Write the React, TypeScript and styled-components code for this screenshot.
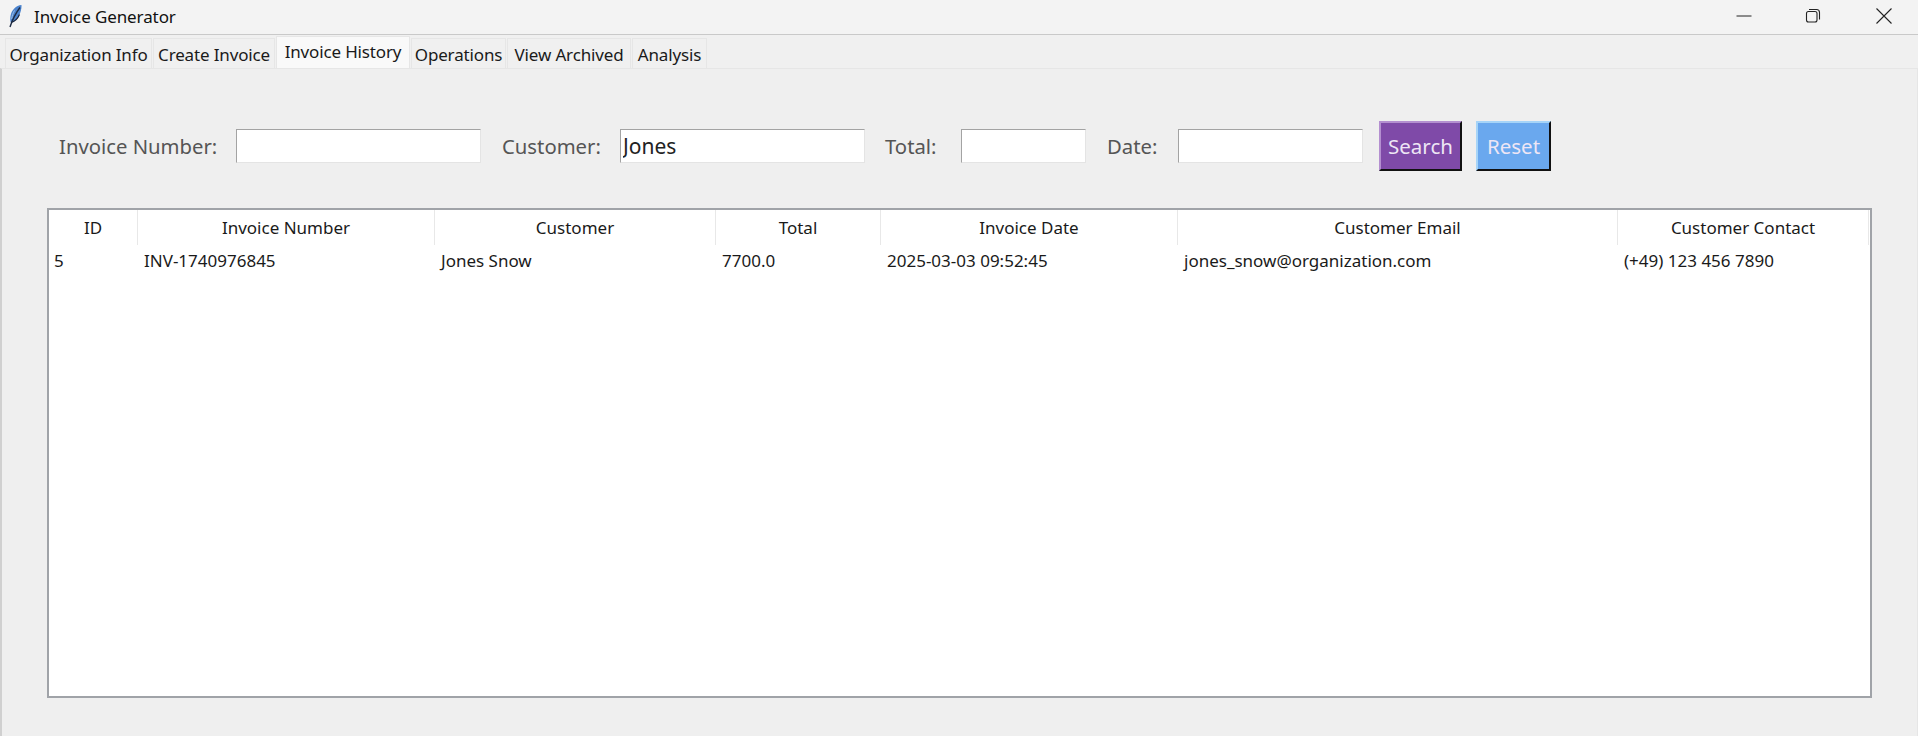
import styled, { createGlobalStyle } from 'styled-components'

const GlobalStyle = createGlobalStyle`
  html, body { margin: 0; padding: 0; background: #f0f0f0; }
  body { font-family: "Noto Sans", "Open Sans", sans-serif; }
`

const Window = styled.div`
  width: 1918px;
  height: 736px;
  display: flex;
  flex-direction: column;
  overflow: hidden;
  background: #f0f0f0;
`

const TitleBar = styled.div`
  height: 34px;
  flex: none;
  display: flex;
  align-items: center;
  background: #f3f3f3;
  border-bottom: 1px solid #c9c9c9;
  padding-left: 6px;
`

const AppIcon = styled.svg`
  width: 18px;
  height: 24px;
  margin-right: 10px;
  margin-bottom: 2px;
`

const AppTitle = styled.span`
  font-size: 17px;
  color: #111;
  letter-spacing: -0.1px;
  flex: 1;
  padding-bottom: 2px;
`

const WinButton = styled.div<{ $w: number }>`
  width: ${p => p.$w}px;
  height: 34px;
  box-sizing: border-box;
  padding-bottom: 3px;
  display: flex;
  align-items: center;
  justify-content: center;
`

const TabRow = styled.div`
  height: 33px;
  flex: none;
  display: flex;
  align-items: flex-end;
  padding-left: 5px;
  gap: 1px;
`

const Tab = styled.div<{ $active?: boolean; $w: number }>`
  width: ${p => p.$w}px;
  height: ${p => (p.$active ? 32 : 30)}px;
  box-sizing: border-box;
  display: flex;
  align-items: center;
  justify-content: center;
  background: ${p => (p.$active ? '#f9f9f9' : '#f0f0f0')};
  border: 1px solid #e6e6e6;
  border-bottom: none;
  font-size: 17px;
  letter-spacing: -0.15px;
  color: #1a1a1a;
  padding-top: ${p => (p.$active ? 0 : 2)}px;
  padding-bottom: ${p => (p.$active ? 2 : 0)}px;
  white-space: nowrap;
`

const Panel = styled.div`
  flex: 1;
  box-sizing: border-box;
  border-left: 2px solid #d0d0d0;
  border-top: 1px solid #e6e6e6;
  border-right: 1px solid #e6e6e6;
  background: #efefef;
  padding: 52px 45px 38px 45px;
  display: flex;
  flex-direction: column;
`

const SearchBar = styled.div`
  height: 50px;
  flex: none;
  display: flex;
  align-items: center;
  padding-left: 12px;
  margin-bottom: 37px;
`

const FieldLabel = styled.label<{ $w: number }>`
  width: ${p => p.$w}px;
  font-size: 20.3px;
  color: #555;
  white-space: nowrap;
`

const FieldInput = styled.input<{ $w: number; $after: number }>`
  width: ${p => p.$w}px;
  margin-right: ${p => p.$after}px;
  height: 34px;
  box-sizing: border-box;
  background: #fff;
  border: 1px solid #e4e4e4;
  border-top: 1px solid #a3a3a3;
  border-left: 1px solid #a3a3a3;
  outline: none;
  padding: 0 2px;
  font-family: inherit;
  font-size: 21px;
  color: #222;
`

const ActionButton = styled.button<{ $bg: number; $w: number }>`
  width: ${p => p.$w}px;
  height: 50px;
  box-sizing: border-box;
  padding: 0;
  margin-right: 14px;
  font-family: inherit;
  font-size: 20.5px;
  color: #eee6f5;
  background: ${p => (p.$bg === 0 ? '#7f4aa8' : '#6aa8ee')};
  border: 2px solid;
  border-color: ${p => (p.$bg === 0 ? '#b48fd0' : '#a6d4f8')} #111 #111 ${p => (p.$bg === 0 ? '#b48fd0' : '#a6d4f8')};
`

const TableFrame = styled.div`
  flex: 1;
  box-sizing: border-box;
  background: #fff;
  border: 2px solid #a0a3a8;
`

const columns = '89px 297px 281px 165px 297px 440px 251px'

const HeaderRow = styled.div`
  display: grid;
  grid-template-columns: ${columns};
  height: 35px;
`

const HeaderCell = styled.div`
  display: flex;
  align-items: center;
  justify-content: center;
  border-right: 1px solid #e8e8e8;
  font-size: 17px;
  color: #1a1a1a;
`

const DataRow = styled.div`
  display: grid;
  grid-template-columns: ${columns};
  height: 30px;
`

const DataCell = styled.div`
  display: flex;
  align-items: center;
  padding-left: 6px;
  font-size: 17px;
  color: #1a1a1a;
  white-space: nowrap;
  &:first-child { padding-left: 5px; }
`

const tabs = [
  { label: 'Organization Info', w: 147 },
  { label: 'Create Invoice', w: 122 },
  { label: 'Invoice History', w: 134, active: true },
  { label: 'Operations', w: 95 },
  { label: 'View Archived', w: 124 },
  { label: 'Analysis', w: 75 },
]

const headers = ['ID', 'Invoice Number', 'Customer', 'Total', 'Invoice Date', 'Customer Email', 'Customer Contact']
const row = ['5', 'INV-1740976845', 'Jones Snow', '7700.0', '2025-03-03 09:52:45', 'jones_snow@organization.com', '(+49) 123 456 7890']

export default function App() {
  return (
    <Window>
      <GlobalStyle />
      <TitleBar>
        <AppIcon viewBox="0 0 18 24">
          <path d="M15.500 1C10 1.500 5.500 6 4.500 12c-.4 2.500-.3 4.500.2 6.500C9.500 17.500 13 13 14.500 8c.7-2.500 1.200-5 1-7z" fill="#4a82cc" />
          <path d="M8.500 6.500C7 9 6 12 5.700 15" stroke="#9cc0ea" strokeWidth="1" fill="none" />
          <path d="M14 3.500C10.500 8 7 14 4 23" stroke="#1d2b44" strokeWidth="1.400" fill="none" />
          <path d="M5 18.500C9.500 17.500 12 14 13.500 10.500" stroke="#16233c" strokeWidth="1.200" fill="none" />
        </AppIcon>
        <AppTitle>Invoice Generator</AppTitle>
        <WinButton $w={65}>
          <svg width="16" height="16" viewBox="0 0 16 16"><path d="M0.500 8h15" stroke="#222" strokeWidth="1" /></svg>
        </WinButton>
        <WinButton $w={73}>
          <svg width="16" height="16" viewBox="0 0 16 16" fill="none" stroke="#222" strokeWidth="1.100">
            <rect x="1.500" y="3.500" width="10.500" height="10.500" rx="2" />
            <path d="M4 1.500h7.500a3 3 0 0 1 3 3V11.500" />
          </svg>
        </WinButton>
        <WinButton $w={69}>
          <svg width="16" height="16" viewBox="0 0 16 16"><path d="M0.500 0.500l15 15M15.500 0.500l-15 15" stroke="#222" strokeWidth="1.100" /></svg>
        </WinButton>
      </TitleBar>
      <TabRow>
        {tabs.map(t => (
          <Tab key={t.label} $w={t.w} $active={t.active}>{t.label}</Tab>
        ))}
      </TabRow>
      <Panel>
        <SearchBar>
          <FieldLabel $w={177}>Invoice Number:</FieldLabel>
          <FieldInput $w={245} $after={21} />
          <FieldLabel $w={118}>Customer:</FieldLabel>
          <FieldInput $w={245} $after={20} defaultValue="Jones" />
          <FieldLabel $w={76}>Total:</FieldLabel>
          <FieldInput $w={125} $after={21} />
          <FieldLabel $w={71}>Date:</FieldLabel>
          <FieldInput $w={185} $after={16} />
          <ActionButton $bg={0} $w={83}>Search</ActionButton>
          <ActionButton $bg={1} $w={75}>Reset</ActionButton>
        </SearchBar>
        <TableFrame>
          <HeaderRow>
            {headers.map(h => <HeaderCell key={h}>{h}</HeaderCell>)}
          </HeaderRow>
          <DataRow>
            {row.map(c => <DataCell key={c}>{c}</DataCell>)}
          </DataRow>
        </TableFrame>
      </Panel>
    </Window>
  )
}
